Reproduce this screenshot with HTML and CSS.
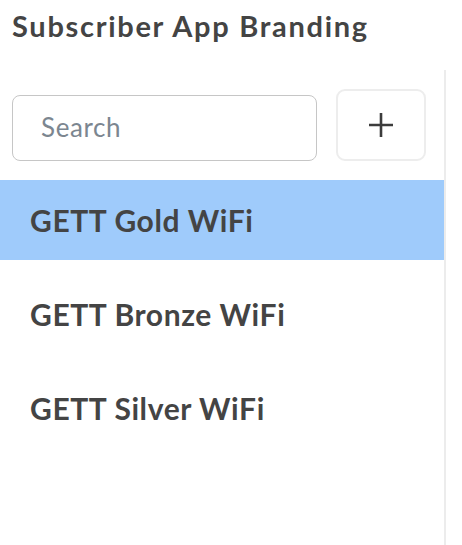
FILE: index.html
```html
<!DOCTYPE html>
<html lang="en">
<head>
  <meta charset="UTF-8">
  <meta name="viewport" content="width=device-width, initial-scale=1.0">
  <title>Subscriber App Branding</title>
  <link rel="stylesheet" href="styles.css">
</head>
<body>
<h1 class="page-title">Subscriber App Branding</h1>

<div class="sidebar">
  <div class="toolbar">
    <input type="text" class="search" placeholder="Search">
    <button class="add-btn" aria-label="Add">
      <svg width="24" height="24" viewBox="0 0 24 24">
        <path d="M12 0v24M0 12h24" stroke="#3c3c3c" stroke-width="2.6" fill="none"/>
      </svg>
    </button>
  </div>

  <ul class="brand-list">
    <li class="brand-item active">GETT Gold WiFi</li>
    <li class="brand-item">GETT Bronze WiFi</li>
    <li class="brand-item">GETT Silver WiFi</li>
  </ul>
</div>
</body>
</html>
```

FILE: styles.css
```css
body {
  font-family: 'Lato', 'Liberation Sans', sans-serif;
  background-color: #fff;
  color: #444;
  margin: 0;
}

.page-title {
  font-size: 29px;
  font-weight: bold;
  letter-spacing: 1.7px;
  margin: 0;
  padding: 6px 12px 0;
  height: 70px;
  box-sizing: border-box;
  line-height: 40px;
}

.sidebar {
  width: 446px;
  height: 475px;
  box-sizing: border-box;
  border-right: 2px solid #ececec;
}

.toolbar {
  display: flex;
  align-items: flex-end;
  gap: 19px;
  padding: 19px 18px 0 12px;
}

.search {
  flex: 1;
  min-width: 0;
  height: 66px;
  box-sizing: border-box;
  border: 1.5px solid #c6c6c6;
  border-radius: 8px;
  padding: 0 0 2px 28px;
  font-family: 'Lato', sans-serif;
  font-size: 26px;
  letter-spacing: 0.6px;
  color: #444;
  outline: none;
}

.search::placeholder {
  color: #7c8690;
}

.add-btn {
  width: 90px;
  height: 72px;
  box-sizing: border-box;
  border: 2px solid #ededed;
  border-radius: 9px;
  background-color: #fff;
  display: flex;
  align-items: center;
  justify-content: center;
  padding: 0;
  cursor: pointer;
}

.brand-list {
  list-style: none;
  margin: 19px 0 0;
  padding: 0;
  display: flex;
  flex-direction: column;
  gap: 14px;
}

.brand-item {
  height: 80px;
  display: flex;
  align-items: center;
  padding-left: 30px;
  font-size: 30px;
  font-weight: bold;
  letter-spacing: 0.6px;
  color: #444;
  cursor: pointer;
}

.brand-item.active {
  background-color: #9fcbfb;
}
```
